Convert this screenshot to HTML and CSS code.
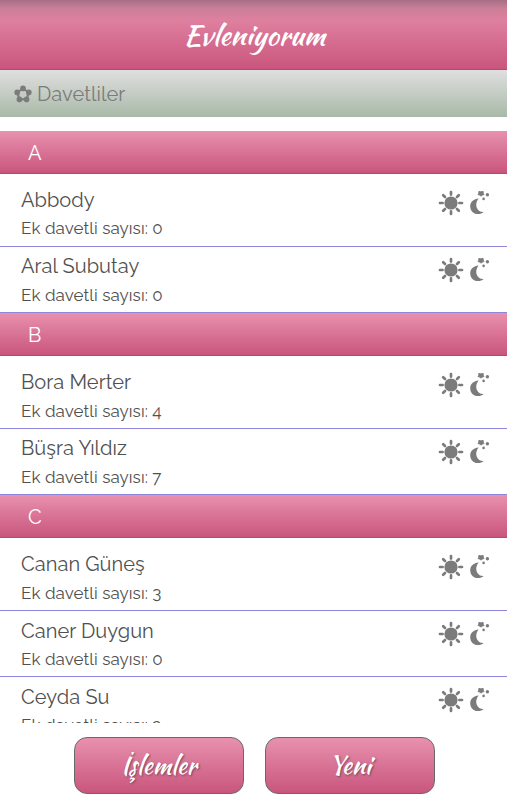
FILE: index.html
```html
<!DOCTYPE html>
<html lang="tr">
<head>
<meta charset="UTF-8" />
<meta name="viewport" content="width=device-width, initial-scale=1" />
<title>Evleniyorum</title>
<link rel="stylesheet" href="styles.css">
</head>
<body>
<svg class="defs" width="0" height="0">
  <symbol id="flower" viewBox="0 0 18 18">
    <circle cx="9" cy="9.4" r="4.9" fill="none" stroke="currentColor" stroke-width="2.2"/>
    <circle cx="9" cy="3.4" r="2.8"/>
    <circle cx="14.8" cy="7.4" r="2.8"/>
    <circle cx="12.6" cy="14.4" r="2.8"/>
    <circle cx="5.4" cy="14.4" r="2.8"/>
    <circle cx="3.2" cy="7.4" r="2.8"/>
  </symbol>
  <symbol id="sun" viewBox="0 0 26 26">
    <circle cx="13" cy="13" r="6.6"/>
    <path d="M13 2V4.6M13 21.4V24M2 13H4.6M21.4 13H24M5.2 5.2L7 7M19 19L20.8 20.8M20.8 5.2L19 7M7 19L5.2 20.8" fill="none" stroke="currentColor" stroke-width="2.7" stroke-linecap="round"/>
  </symbol>
  <symbol id="moon" viewBox="0 0 22 26">
    <path d="M9.6 8.4C3.8 8.8 1.2 12.6 1.2 16.2C1.2 24 10.2 26.2 14.6 22C8.2 22.6 4.6 14.8 9.6 8.4Z"/>
    <path d="M9.8 1.5L12 1.9L14.2 1.5L14.1 3.2L15 4.5L13 5.1L12 6.2L11 5.1L9 4.5L9.9 3.2Z" stroke="currentColor" stroke-linejoin="round"/>
    <circle cx="18.4" cy="4.8" r="1.7"/>
    <circle cx="14.6" cy="8.9" r="1.3"/>
  </symbol>
</svg>

<div class="page">
  <header class="top"><h1>Evleniyorum</h1></header>
  <div class="subtitle"><svg class="flower"><use href="#flower"/></svg><span>Davetliler</span></div>

  <div class="list">
    <h2 class="letter">A</h2>
    <div class="group">
      <div class="guest">
        <div><p class="name">Abbody</p><p class="extra">Ek davetli sayısı: 0</p></div>
        <div class="icons"><svg class="sun"><use href="#sun"/></svg><svg class="moon"><use href="#moon"/></svg></div>
      </div>
      <div class="guest">
        <div><p class="name">Aral Subutay</p><p class="extra">Ek davetli sayısı: 0</p></div>
        <div class="icons"><svg class="sun"><use href="#sun"/></svg><svg class="moon"><use href="#moon"/></svg></div>
      </div>
    </div>

    <h2 class="letter">B</h2>
    <div class="group">
      <div class="guest">
        <div><p class="name">Bora Merter</p><p class="extra">Ek davetli sayısı: 4</p></div>
        <div class="icons"><svg class="sun"><use href="#sun"/></svg><svg class="moon"><use href="#moon"/></svg></div>
      </div>
      <div class="guest">
        <div><p class="name">Büşra Yıldız</p><p class="extra">Ek davetli sayısı: 7</p></div>
        <div class="icons"><svg class="sun"><use href="#sun"/></svg><svg class="moon"><use href="#moon"/></svg></div>
      </div>
    </div>

    <h2 class="letter">C</h2>
    <div class="group">
      <div class="guest">
        <div><p class="name">Canan Güneş</p><p class="extra">Ek davetli sayısı: 3</p></div>
        <div class="icons"><svg class="sun"><use href="#sun"/></svg><svg class="moon"><use href="#moon"/></svg></div>
      </div>
      <div class="guest">
        <div><p class="name">Caner Duygun</p><p class="extra">Ek davetli sayısı: 0</p></div>
        <div class="icons"><svg class="sun"><use href="#sun"/></svg><svg class="moon"><use href="#moon"/></svg></div>
      </div>
      <div class="guest">
        <div><p class="name">Ceyda Su</p><p class="extra">Ek davetli sayısı: 2</p></div>
        <div class="icons"><svg class="sun"><use href="#sun"/></svg><svg class="moon"><use href="#moon"/></svg></div>
      </div>
    </div>
  </div>

  <footer class="actions">
    <button class="btn">İşlemler</button>
    <button class="btn">Yeni</button>
  </footer>
</div>
</body>
</html>
```
FILE: styles.css
```css
* { box-sizing:border-box; }
body { margin:0; background:#fff; color:#505050; font-family:Raleway, Lato, sans-serif; }
h1, h2, p { margin:0; font-weight:400; }
.defs { display:block; }
svg { fill:currentColor; }

.page { height:800px; display:flex; flex-direction:column; overflow:hidden; }

.top { height:70px; flex:none; display:flex; justify-content:center; align-items:center; padding:1px 0 0 2px; color:#fff; border-bottom:1px solid #c0446c; background:linear-gradient(#a66e84 0, #c97e98 8px, #df809f 20px, #c9557d 100%); }
.top h1 { font:400 28.2px/40px "Kaushan Script", Lato, cursive; }

.subtitle { height:47px; flex:none; display:flex; align-items:center; gap:5px; padding-left:14px; color:#7b7b7b; font-size:20px; letter-spacing:.1px; background:linear-gradient(#dfdfdf, #a9b9a8); }
.flower { width:18px; height:18px; }

.list { height:592px; flex:none; margin-top:14px; overflow:hidden; }
.letter { height:42.6px; padding-left:28px; font-size:20px; line-height:44px; color:#fff; background:linear-gradient(#e891ae, #c9557d); border-bottom:1px solid #bd466e; }
.group { padding-top:6.9px; }
.guest { height:66.3px; display:flex; justify-content:space-between; padding:6.6px 16px 0 21px; border-bottom:1px solid #8e86dc; }
.name { font-size:20px; line-height:26px; letter-spacing:.05px; }
.extra { font-size:17px; line-height:22px; margin-top:4.4px; letter-spacing:.08px; }

.icons { display:flex; gap:5px; padding-top:3.2px; color:#7b7b7b; }
.sun { width:26px; height:26px; }
.moon { width:22px; height:26px; }

.actions { display:flex; justify-content:center; gap:21px; padding:14px 0 0 1px; }
.btn { width:170px; height:57px; padding:1px 0 0 1px; border:1.5px solid #686868; border-radius:13px; color:#fff; background:linear-gradient(#e891ae, #c9557d); font:400 24.4px/30px "Kaushan Script", Lato, cursive; text-shadow:1px 1px 2px #7b4659; }
```
